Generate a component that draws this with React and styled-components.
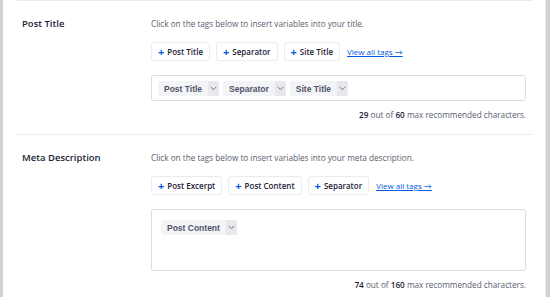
import React from 'react';
import styled, { createGlobalStyle } from 'styled-components';

const GlobalStyle = createGlobalStyle`
  html, body {
    margin: 0;
    padding: 0;
    background: #d2d2d2;
  }
  body {
    font-family: "Open Sans", Lato, sans-serif;
  }
`;

const sections = [
  {
    label: 'Post Title',
    hint: 'Click on the tags below to insert variables into your title.',
    tags: ['Post Title', 'Separator', 'Site Title'],
    tokens: ['Post Title', 'Separator', 'Site Title'],
    used: 29,
    max: 60,
    tall: false,
  },
  {
    label: 'Meta Description',
    hint: 'Click on the tags below to insert variables into your meta description.',
    tags: ['Post Excerpt', 'Post Content', 'Separator'],
    tokens: ['Post Content'],
    used: 74,
    max: 160,
    tall: true,
  },
];

const Chevron = () => (
  <svg width="7" height="5" viewBox="0 0 7 5" fill="none">
    <path d="M1 1.2L3.5 3.6L6 1.2" stroke="#70737f" strokeWidth="1" strokeLinecap="round" strokeLinejoin="round" />
  </svg>
);

const App = () => (
  <>
    <GlobalStyle />
    <Panel>
      {sections.map((s) => (
        <Row key={s.label}>
          <Label>{s.label}</Label>
          <Content>
            <Hint>{s.hint}</Hint>
            <TagBar>
              {s.tags.map((t) => (
                <TagButton key={t}>
                  <Plus>+</Plus>
                  {t}
                </TagButton>
              ))}
              <ViewAll href="#">View all tags →</ViewAll>
            </TagBar>
            <Editor tall={s.tall}>
              {s.tokens.map((t) => (
                <Token key={t}>
                  <TokenText>{t}</TokenText>
                  <TokenCaret>
                    <Chevron />
                  </TokenCaret>
                </Token>
              ))}
            </Editor>
            <Counter>
              <b>{s.used}</b> out of <b>{s.max}</b> max recommended characters.
            </Counter>
          </Content>
        </Row>
      ))}
    </Panel>
  </>
);

export default App;

const Panel = styled.div`
  margin-left: 3px;
  width: 543px;
  height: 297px;
  background: #fff;
  border-right: 1px solid #ececec;
  box-sizing: border-box;
  padding: 0 13px 0 14px;
  overflow: hidden;
`;

const Row = styled.section`
  display: flex;
  border-top: 1px solid #ebebeb;
  padding: 17px 6px 13px 5px;
`;

const Label = styled.div`
  width: 129px;
  flex-shrink: 0;
  font-size: 9.5px;
  font-weight: 600;
  color: #1d2236;
  line-height: 12px;
`;

const Content = styled.div`
  flex: 1;
  display: flex;
  flex-direction: column;
`;

const Hint = styled.div`
  font-size: 8.2px;
  line-height: 12px;
  color: #595d6e;
`;

const TagBar = styled.div`
  display: flex;
  align-items: center;
  gap: 6px;
  margin-top: 12px;
`;

const TagButton = styled.div`
  height: 19px;
  box-sizing: border-box;
  display: flex;
  align-items: center;
  gap: 3px;
  padding: 0 6px;
  border: 1px solid #eaebee;
  border-radius: 3px;
  background: #fff;
  font-size: 8px;
  font-weight: 600;
  color: #1d2236;
`;

const Plus = styled.span`
  color: #005ae0;
  font-size: 11px;
  font-weight: 700;
  line-height: 1;
  margin-top: -1px;
`;

const ViewAll = styled.a`
  margin-left: 1px;
  font-size: 8px;
  color: #005ae0;
  text-decoration: underline;
`;

const Editor = styled.div`
  margin-top: 14px;
  height: ${({ tall }) => (tall ? '62px' : '26px')};
  box-sizing: border-box;
  border: 1px solid #dcdde1;
  border-radius: 3px;
  display: flex;
  align-items: flex-start;
  gap: 4px;
  padding: ${({ tall }) => (tall ? '10px 9px' : '5px 6px')};
`;

const Token = styled.div`
  display: flex;
  height: 15px;
  border-radius: 2px;
  overflow: hidden;
  background: #f3f4f5;
`;

const TokenText = styled.span`
  display: flex;
  align-items: center;
  padding: 0 6px;
  font-family: "Liberation Sans", Arial, sans-serif;
  font-size: 8.5px;
  font-weight: 700;
  color: #50546a;
`;

const TokenCaret = styled.span`
  width: 11px;
  display: flex;
  align-items: center;
  justify-content: center;
  background: #e8e9ec;
`;

const Counter = styled.div`
  margin-top: 8px;
  text-align: right;
  font-size: 8.2px;
  line-height: 12px;
  color: #595d6e;
  & b {
    font-weight: 600;
    color: #1d2236;
  }
`;
